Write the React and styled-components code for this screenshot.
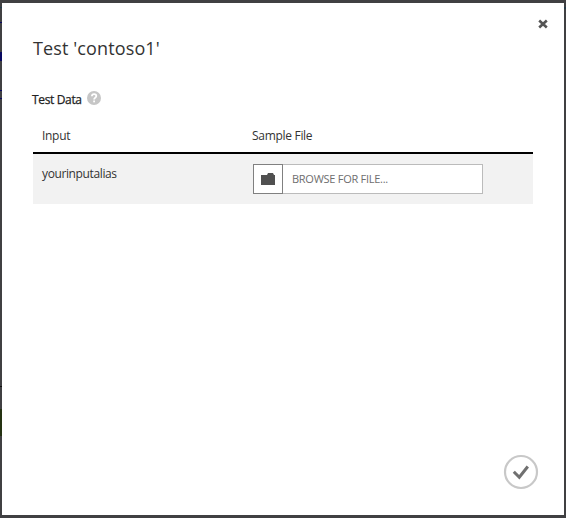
import React from "react";
import styled, { createGlobalStyle } from "styled-components";

const GlobalStyle = createGlobalStyle`
  * { box-sizing: border-box; }
  body { margin: 0; background: #404042; }
`;

const Backdrop = styled.div`
  position: relative;
  width: 566px;
  height: 518px;
  padding: 3px 2px;
  background: #404042;
  font-family: "Open Sans", "Noto Sans", sans-serif;
  font-size: 12px;
  color: #333;
`;

const PageSliver = styled.i`
  position: absolute;
  left: ${(p) => p.$left || 0}px;
  top: ${(p) => p.$top}px;
  width: 2px;
  height: ${(p) => p.$height}px;
  background: ${(p) => p.$color};
`;

const Dialog = styled.section`
  display: flex;
  flex-direction: column;
  width: 562px;
  height: 512px;
  padding: 16px 26px 25px 31px;
  background: #fff;
`;

const CloseButton = styled.button`
  align-self: flex-end;
  display: flex;
  width: 10px;
  height: 10px;
  margin-right: -10px;
  padding: 0;
  border: 0;
  background: none;
`;

const Title = styled.h1`
  margin: 7px 0 0;
  font-size: 18px;
  line-height: 24px;
  font-weight: 400;
  letter-spacing: 0.12px;
  white-space: nowrap;
`;

const SectionLabel = styled.h2`
  display: flex;
  align-items: center;
  gap: 4px;
  height: 16px;
  margin: 30px 0 0 -1px;
  font-size: 12px;
  font-weight: 500;
  letter-spacing: -0.35px;
  color: #222;
`;

const LabelText = styled.span`
  width: 51px;
  padding-top: 3px;
  line-height: 16px;
  white-space: nowrap;
  -webkit-text-stroke: 0.25px #222;
`;

const TableHead = styled.div`
  display: grid;
  grid-template-columns: 210px 1fr;
  width: 500px;
  height: 48px;
  padding: 21px 9px 0;
  border-bottom: 2px solid #000;
  line-height: 18px;
`;

const HeadCell = styled.span`
  letter-spacing: -0.3px;
`;

const TableRow = styled.div`
  display: grid;
  grid-template-columns: 211px 230px;
  width: 500px;
  height: 50px;
  padding: 10px 9px;
  background: #f2f2f2;
`;

const Alias = styled.span`
  padding-top: 1px;
  line-height: 18px;
  letter-spacing: -0.38px;
`;

const FilePicker = styled.div`
  display: flex;
  height: 30px;
`;

const FolderButton = styled.button`
  display: flex;
  align-items: center;
  justify-content: center;
  width: 30px;
  height: 30px;
  padding: 0;
  border: 1px solid #808080;
  background: #fff;
`;

const FileField = styled.div`
  flex: 1;
  padding-left: 9px;
  border: 1px solid #bbb;
  border-left: 0;
  background: #fff;
  color: #6e6e6e;
  font-size: 11px;
  line-height: 28px;
  letter-spacing: -0.27px;
`;

const ConfirmButton = styled.button`
  align-self: flex-end;
  display: flex;
  width: 36px;
  height: 36px;
  margin-top: auto;
  margin-right: -1px;
  padding: 0;
  border: 0;
  background: none;
`;

const slivers = [
  { top: 7, height: 1, color: "#203c50" },
  { top: 22, height: 1, color: "#080860" },
  { top: 52, height: 9, color: "#080860" },
  { top: 90, height: 1, color: "#080860" },
  { top: 98, height: 1, color: "#080860" },
  { top: 386, height: 1, color: "#101010" },
  { top: 409, height: 27, color: "#253312" },
  { top: 7, height: 2, color: "#273b4a", left: 564 },
];

export default function App() {
  return (
    <>
      <GlobalStyle />
      <Backdrop>
        {slivers.map((s, i) => (
          <PageSliver key={i} $top={s.top} $height={s.height} $color={s.color} $left={s.left} />
        ))}
        <Dialog>
          <CloseButton aria-label="Close">
            <svg width="10" height="10" viewBox="0 0 10 10">
              <path d="M1.2 1.5L8.8 8.5M8.8 1.5L1.2 8.5" stroke="#555" strokeWidth="2.6" />
            </svg>
          </CloseButton>
          <Title>Test 'contoso1'</Title>
          <SectionLabel>
            <LabelText>Test Data</LabelText>
            <svg width="14" height="14" viewBox="0 0 14 14">
              <circle cx="7" cy="7" r="7" fill="#c6c6c6" />
              <path d="M4.9 5.3C4.9 3.8 5.8 3.1 7.1 3.1S9.3 3.9 9.3 5C9.3 6.6 7.1 6.6 7.1 8.5" fill="none" stroke="#fff" strokeWidth="1.8" />
              <rect x="6.2" y="9.5" width="1.8" height="1.8" fill="#fff" />
            </svg>
          </SectionLabel>
          <TableHead>
            <HeadCell>Input</HeadCell>
            <HeadCell>Sample File</HeadCell>
          </TableHead>
          <TableRow>
            <Alias>yourinputalias</Alias>
            <FilePicker>
              <FolderButton aria-label="Choose file">
                <svg width="14" height="12" viewBox="0 0 14 12">
                  <path d="M0 2H6L7 0H12L13 2H14V12H0Z" fill="#505050" />
                </svg>
              </FolderButton>
              <FileField>BROWSE FOR FILE...</FileField>
            </FilePicker>
          </TableRow>
          <ConfirmButton aria-label="Confirm">
            <svg width="36" height="36" viewBox="0 0 36 36">
              <circle cx="18" cy="18" r="16" fill="none" stroke="#c8c8c8" strokeWidth="2.2" />
              <path d="M10.8 17.8L16.3 23.3L24.8 12.5" fill="none" stroke="#707070" strokeWidth="3" />
            </svg>
          </ConfirmButton>
        </Dialog>
      </Backdrop>
    </>
  );
}
